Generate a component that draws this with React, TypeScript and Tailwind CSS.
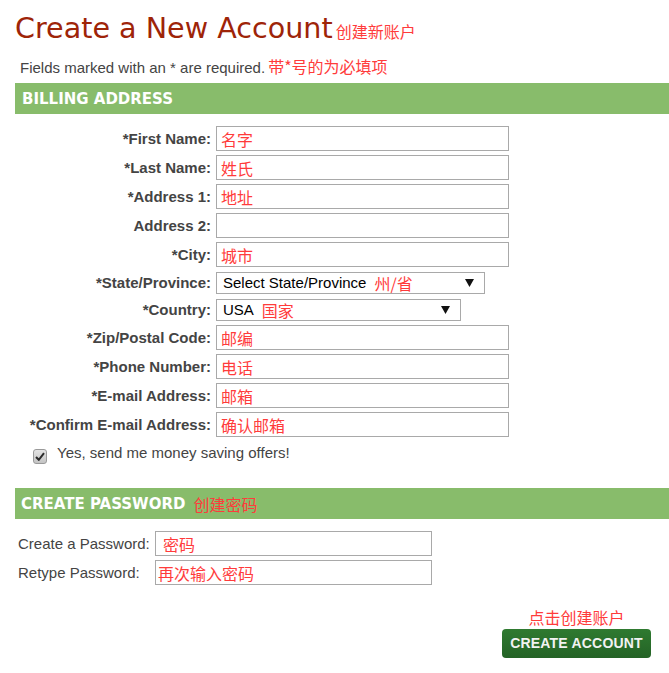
import React from "react";

const cjk = "font-['Noto_Sans_CJK_SC',sans-serif]";

function Field({ label, hint, bold = true }: { label: string; hint?: string; bold?: boolean }) {
  return (
    <div className="flex items-center h-[25px]">
      <div className={`w-[196px] text-right text-[15px] leading-[18px] text-[#444] ${bold ? "font-bold" : ""}`}>
        {label}
      </div>
      <div className="ml-[5px] w-[293px] h-[25px] border border-[#a9a9a9] flex items-center pl-[4px]">
        {hint && <span className={`${cjk} text-[16px] leading-[20px] text-[#ff3b3b]`}>{hint}</span>}
      </div>
    </div>
  );
}

function FakeSelect({ label, value, hint, width }: { label: string; value: string; hint: string; width: string }) {
  return (
    <div className="flex items-center h-[22px] mt-[1px]">
      <div className="w-[196px] text-right text-[15px] leading-[18px] text-[#444] font-bold">{label}</div>
      <div className={`ml-[5px] ${width} h-[22px] border border-[#a9a9a9] flex items-center pl-[6px] pr-[10px]`}>
        <span className="text-[15px] leading-[18px] text-black">{value}</span>
        <span className={`${cjk} ml-[8px] text-[16px] leading-[20px] text-[#ff3b3b]`}>{hint}</span>
        <svg className="ml-auto" width="9" height="8" viewBox="0 0 9 8">
          <path d="M0 0 H9 L4.5 8 Z" fill="#111" />
        </svg>
      </div>
    </div>
  );
}

function PasswordField({ label, hint, pad }: { label: string; hint: string; pad: string }) {
  return (
    <div className="flex items-center h-[25px]">
      <div className="w-[140px] pl-[3px] text-[15px] leading-[18px] text-[#444]">{label}</div>
      <div className={`w-[277px] h-[25px] border border-[#a9a9a9] flex items-end pb-[1px] ${pad}`}>
        <span className={`${cjk} text-[16px] leading-[20px] text-[#ff3b3b]`}>{hint}</span>
      </div>
    </div>
  );
}

export default function App() {
  return (
    <div className="w-[669px] h-[673px] bg-white overflow-hidden font-['Liberation_Sans','Noto_Sans_CJK_SC',sans-serif]">
      <div className="pl-[15px]">
        <h1 className="pt-[12px] h-[44px] flex items-baseline">
          <span className="font-['DejaVu_Sans',sans-serif] text-[28.6px] leading-[32px] text-[#9e2408]">
            Create a New Account
          </span>
          <span className={`${cjk} ml-[3px] text-[16px] leading-[20px] text-[#ff3b3b]`}>创建新账户</span>
        </h1>

        <p className="mt-[12px] h-[20px] pl-[5px] flex items-baseline">
          <span className="text-[15px] leading-[20px] text-[#444]">Fields marked with an * are required.</span>
          <span className={`${cjk} ml-[3px] text-[16px] leading-[20px] text-[#ff3b3b]`}>带*号的为必填项</span>
        </p>

        <div className="mt-[7px] h-[31px] bg-[#88bc6b] flex items-center pl-[7px]">
          <span className="font-['DejaVu_Sans',sans-serif] font-bold text-[15px] leading-[18px] text-white">
            BILLING ADDRESS
          </span>
        </div>

        <div className="mt-[12px] flex flex-col gap-[4px]">
          <Field label="*First Name:" hint="名字" />
          <Field label="*Last Name:" hint="姓氏" />
          <Field label="*Address 1:" hint="地址" />
          <Field label="Address 2:" />
          <Field label="*City:" hint="城市" />
          <FakeSelect label="*State/Province:" value="Select State/Province" hint="州/省" width="w-[269px]" />
          <FakeSelect label="*Country:" value="USA" hint="国家" width="w-[245px]" />
          <Field label="*Zip/Postal Code:" hint="邮编" />
          <Field label="*Phone Number:" hint="电话" />
          <Field label="*E-mail Address:" hint="邮箱" />
          <Field label="*Confirm E-mail Address:" hint="确认邮箱" />
        </div>

        <div className="mt-[7px] h-[20px] flex items-start pl-[18px]">
          <div className="mt-[5px] w-[14px] h-[15px] rounded-[3px] border border-[#9a9a9a] bg-gradient-to-b from-[#e4e4e4] to-[#c4c4c4] flex items-center justify-center">
            <svg width="10" height="9" viewBox="0 0 10 9">
              <path d="M1 5 L3.8 7.8 L9 1.2" fill="none" stroke="#2a2a2a" strokeWidth="2" />
            </svg>
          </div>
          <span className="ml-[10px] text-[15px] leading-[18px] text-[#444]">Yes, send me money saving offers!</span>
        </div>

        <div className="mt-[24px] h-[31px] bg-[#88bc6b] flex items-center pl-[6px]">
          <span className="font-['DejaVu_Sans',sans-serif] font-bold text-[15px] leading-[18px] text-white">
            CREATE PASSWORD
          </span>
          <span className={`${cjk} ml-[8px] text-[16px] leading-[20px] text-[#ff3b3b]`}>创建密码</span>
        </div>

        <div className="mt-[12px] flex flex-col gap-[4px]">
          <PasswordField label="Create a Password:" hint="密码" pad="pl-[7px]" />
          <PasswordField label="Retype Password:" hint="再次输入密码" pad="pl-[2px]" />
        </div>

        <div className="mt-[22px] flex justify-end pr-[18px]">
          <div className="flex flex-col items-center w-[149px]">
            <span className={`${cjk} text-[16px] leading-[20px] text-[#ff3b3b]`}>点击创建账户</span>
            <button className="mt-[2px] w-[149px] h-[29px] rounded-[4px] bg-gradient-to-b from-[#2f7a30] to-[#246326] text-[14px] font-bold text-[#f2f2f2] tracking-[0.2px]">
              CREATE ACCOUNT
            </button>
          </div>
        </div>
      </div>
    </div>
  );
}
